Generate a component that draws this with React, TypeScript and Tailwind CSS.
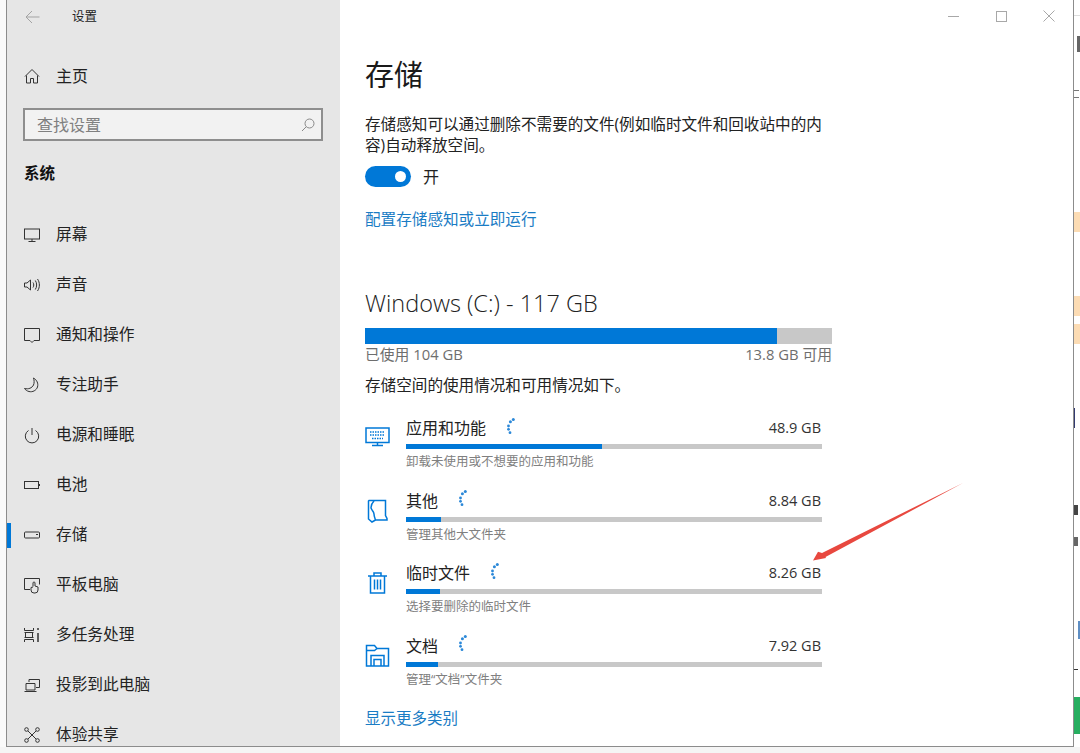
const cjk = { fontFamily: '"Open Sans", "Noto Sans CJK SC", sans-serif' };

const NavIcon = ({ name }: { name: string }) => {
  const paths: Record<string, React.ReactNode> = {
    home: <path d="M2 9.500 9 2.500l7 7M3.500 8.500V16h4v-4.500h3V16h4V8.500" />,
    display: (
      <>
        <rect x="1.500" y="3" width="15" height="10" />
        <path d="M9 13v2.500M5.500 15.500h7" />
      </>
    ),
    sound: (
      <>
        <path d="M1.500 7v4h2.500l3.500 3V4L4 7z" />
        <path d="M10 6.500c1 1.500 1 3.500 0 5M12.300 4.500c1.800 2.700 1.800 6.300 0 9M14.500 3c2.500 3.600 2.500 8.400 0 12" />
      </>
    ),
    notify: <path d="M1.500 2.500h15v12h-5.500L9 16.500l-2-2H1.500z" />,
    moon: <path d="M10.500 2c3.500 2 5 5.500 4 9-1 3.300-5 5.500-8.500 4.500-2-.5-3.500-1.500-4.500-3 4 1 7.500-.5 9-3.500.9-2 .8-4.700 0-7z" />,
    power: <path d="M9 2v7M5.500 4.500a6.700 6.700 0 1 0 7 0" />,
    battery: (
      <>
        <rect x="1.500" y="5.500" width="14" height="7" />
        <path d="M16.500 8v2" />
      </>
    ),
    storage: (
      <>
        <rect x="1.500" y="6" width="15" height="6" rx="1" />
        <path d="M13 8.500h2" />
      </>
    ),
    tablet: (
      <>
        <path d="M7 13.500H1.500v-11h15v6" />
        <path d="M10 10.500V7a1 1 0 0 1 2 0v3l3 1v3a3 3 0 0 1-3 3h-1a3 3 0 0 1-3-3v-2.500l2-.5" />
      </>
    ),
    multi: (
      <>
        <path d="M1.500 2v2.500h9V2M1.500 16v-2.500h9V16M2.500 6.500v5M9.500 6.500v5M1.500 6.500h9M1.500 11.500h9" />
        <path d="M15 2v2M15 7v9" strokeWidth="1.500" />
      </>
    ),
    project: (
      <>
        <path d="M6 6V3.500h10.500v8H13" />
        <path d="M3 7.500h9v6.500H3zM1.500 15.500h12" />
      </>
    ),
    share: (
      <>
        <circle cx="3.500" cy="3.500" r="1.800" />
        <circle cx="14.500" cy="3.500" r="1.800" />
        <circle cx="3.500" cy="14.500" r="1.800" />
        <circle cx="14.500" cy="14.500" r="1.800" />
        <path d="M5 5l8 8M13 5l-8 8" />
      </>
    ),
  };
  return (
    <svg width="18" height="18" viewBox="0 0 18 18" fill="none" stroke="#333" strokeWidth="1">
      {paths[name]}
    </svg>
  );
};

const StorageIcon = ({ name }: { name: string }) => {
  const paths: Record<string, React.ReactNode> = {
    apps: (
      <>
        <rect x="1" y="3" width="23" height="14.500" />
        <path d="M12.500 17.500v3M7 20.500h11" />
        <path d="M5 7h15M5 10h15M7 13.500h11" strokeDasharray="1.500 1" strokeWidth="1.500" />
      </>
    ),
    other: <path d="M4 2.500h16.500v15l1.500 3v1.500H10.500L7 24 3.500 21V3zM9 3c-2 2-3 4-3 6.500 0 2.500 3 3.500 3 6.500 0 2.500 1 4.500 1.500 6" />,
    trash: (
      <>
        <path d="M3 6h19M9 6V3h7v3M5.500 6v17h14V6" />
        <path d="M9.500 9.500v10M12.500 9.500v10M15.500 9.500v10" />
      </>
    ),
    docs: (
      <>
        <path d="M1.500 23V2.500h8l2.500 3h11.500V23z" />
        <path d="M1.500 7.500h8L12 5.500" />
        <path d="M6 23V12.500h13V23M9 23v-6.500h7V23" />
      </>
    ),
  };
  return (
    <svg width="25" height="25" viewBox="0 0 25 25" fill="none" stroke="#0078d7" strokeWidth="1.500">
      {paths[name]}
    </svg>
  );
};

const Spinner = () => (
  <svg width="10" height="17" viewBox="0 0 10 17" fill="#2b88d8">
    <circle cx="6.300" cy="1.500" r="1.500" />
    <circle cx="3.400" cy="3.800" r="1.500" />
    <circle cx="1.500" cy="8" r="1.400" />
    <circle cx="1.500" cy="11.300" r="1.400" />
    <circle cx="3" cy="14.700" r="1.400" />
  </svg>
);

const navItems = [
  { icon: "display", label: "屏幕" },
  { icon: "sound", label: "声音" },
  { icon: "notify", label: "通知和操作" },
  { icon: "moon", label: "专注助手" },
  { icon: "power", label: "电源和睡眠" },
  { icon: "battery", label: "电池" },
  { icon: "storage", label: "存储", active: true },
  { icon: "tablet", label: "平板电脑" },
  { icon: "multi", label: "多任务处理" },
  { icon: "project", label: "投影到此电脑" },
  { icon: "share", label: "体验共享" },
];

const storageItems = [
  { icon: "apps", name: "应用和功能", size: "48.9 GB", desc: "卸载未使用或不想要的应用和功能", used: 196 },
  { icon: "other", name: "其他", size: "8.84 GB", desc: "管理其他大文件夹", used: 35 },
  { icon: "trash", name: "临时文件", size: "8.26 GB", desc: "选择要删除的临时文件", used: 34 },
  { icon: "docs", name: "文档", size: "7.92 GB", desc: "管理“文档”文件夹", used: 32 },
];

const Sidebar = () => (
  <div className="w-[333px] h-full shrink-0 bg-[#e6e6e6] overflow-hidden">
    <div className="h-[34px] flex items-center pl-[18px] text-[#222]">
      <svg width="15" height="14" viewBox="0 0 15 14" fill="none" stroke="#a3a3a3" strokeWidth="1">
        <path d="M14.500 7H1M7 1 1 7l6 6" />
      </svg>
      <span className="ml-[32px] text-[12.500px]">设置</span>
    </div>
    <div className="mt-[17px] h-[50px] flex items-center pl-[16px] text-[16px] text-[#222]">
      <NavIcon name="home" />
      <span className="ml-[15px]">主页</span>
    </div>
    <div className="ml-[16px] mt-[7px] w-[300px] h-[33px] border-2 border-[#8e8e8e] bg-[#f2f2f2] flex items-center pl-[12px] pr-[6px] justify-between">
      <span className="text-[16px] text-[#808080]">查找设置</span>
      <svg width="14" height="14" viewBox="0 0 14 14" fill="none" stroke="#8a8a8a" strokeWidth="1">
        <circle cx="8.500" cy="5.500" r="4.500" />
        <path d="M5.200 8.800 1 13" />
      </svg>
    </div>
    <div className="mt-[22px] pl-[17px] text-[15.500px] font-bold text-[#111] leading-[20px]">系统</div>
    <div className="mt-[27px]">
      {navItems.map((item) => (
        <div key={item.label} className="relative h-[50px] flex items-center pl-[16px] text-[#222]">
          {item.active && <div className="absolute left-0 top-[13px] w-[4px] h-[25px] bg-[#0078d7]" />}
          <NavIcon name={item.icon} />
          <span className="ml-[15px] text-[15.700px]">{item.label}</span>
        </div>
      ))}
    </div>
  </div>
);

const Main = () => (
  <div className="flex-1 h-full bg-white relative overflow-hidden">
    <div className="h-[32px] flex items-center justify-end pr-[18px]">
      <div className="w-[11px] h-px bg-[#a8a8a8]" />
      <div className="ml-[37px] w-[11px] h-[11px] border border-[#a8a8a8]" />
      <svg className="ml-[36px]" width="12" height="12" viewBox="0 0 12 12" stroke="#a8a8a8" strokeWidth="1">
        <path d="M.500.500l11 11M11.500.500l-11 11" />
      </svg>
    </div>
    <div className="pl-[25px]">
      <h1 className="mt-[22px] text-[29px] leading-[42px] text-[#1a1a1a]">存储</h1>
      <p className="mt-[18px] w-[470px] text-[15.600px] leading-[21px] text-[#222]">
        存储感知可以通过删除不需要的文件(例如临时文件和回收站中的内容)自动释放空间。
      </p>
      <div className="mt-[10px] flex items-center h-[21px]">
        <div className="w-[46px] h-[21px] rounded-full bg-[#0078d7] flex items-center justify-end pr-[5px]">
          <div className="w-[11px] h-[11px] rounded-full bg-white" />
        </div>
        <span className="ml-[12px] text-[16px] text-[#222]">开</span>
      </div>
      <div className="mt-[21px] text-[15.600px] leading-[22px] text-[#1a7cc4]">配置存储感知或立即运行</div>
      <h2 className="mt-[56px] text-[23.500px] font-light leading-[34px] text-[#222]">Windows (C:) - 117 GB</h2>
      <div className="mt-[8px] w-[467px] h-[16px] bg-[#c8c8c8]">
        <div className="w-[412px] h-full bg-[#0078d7]" />
      </div>
      <div className="mt-0 w-[467px] flex justify-between text-[14.800px] leading-[20px] text-[#6e6e6e]">
        <span>已使用 104 GB</span>
        <span>13.8 GB 可用</span>
      </div>
      <div className="mt-[10px] text-[15.600px] leading-[22px] text-[#222]">存储空间的使用情况和可用情况如下。</div>
      <div className="mt-[21px]">
        {storageItems.map((item) => (
          <div key={item.name} className="flex h-[72.600px]">
            <div className="w-[41px] pt-[8px]">
              <StorageIcon name={item.icon} />
            </div>
            <div className="w-[416px]">
              <div className="h-[22px] flex items-center text-[16px] text-[#222]">
                <span>{item.name}</span>
                <span className="ml-[21px] -mt-[4px]">
                  <Spinner />
                </span>
                <span className="ml-auto mr-px text-[14.500px] text-[#333]">{item.size}</span>
              </div>
              <div className="mt-[5px] h-[5px] bg-[#c8c8c8]">
                <div className="h-full bg-[#0078d7]" style={{ width: item.used }} />
              </div>
              <div className="mt-[5px] text-[12.500px] leading-[16px] text-[#808080]">{item.desc}</div>
            </div>
          </div>
        ))}
      </div>
      <div className="mt-0 text-[15.500px] leading-[22px] text-[#1a7cc4]">显示更多类别</div>
    </div>
  </div>
);

const RightEdge = () => (
  <div className="flex-1 h-full overflow-hidden bg-white flex flex-col">
    <div className="mt-[15px] h-px bg-[#dddddd]" />
    <div className="mt-[20px] ml-[3px] h-[16px] w-[3px] bg-[#666]" />
    <div className="mt-[38px] w-[5px] h-[8px] border-y border-[#777]" />
    <div className="mt-[114px] h-[20px] bg-[#fcdcb4]" />
    <div className="mt-[64px] h-[20px] bg-[#fcdcb4]" />
    <div className="mt-[8px] h-[20px] bg-[#fcdcb4]" />
    <div className="mt-[64px] w-[1px] h-[20px] bg-[#333a70]" />
    <div className="mt-[77px] w-[4px] h-[10px] bg-[#444]" />
    <div className="mt-[22px] w-[4px] h-[9px] bg-[#666]" />
    <div className="mt-[75px] ml-[4px] w-[2px] h-[18px] bg-[#5f8fc4]" />
    <div className="mt-[30px] w-[4px] h-px bg-[#333]" />
    <div className="mt-[27px] h-[37px] bg-[#27ae60]" />
  </div>
);

export default function App() {
  return (
    <div className="relative w-[1080px] h-[753px] overflow-hidden bg-[#f5f5f5]" style={cjk}>
      <div className="flex h-[747px] bg-white">
        <div className="w-[6px] shrink-0 bg-[#fafafa]" />
        <div className="w-[1068px] shrink-0 h-full flex border-x border-b border-[#8c8c8c]">
          <Sidebar />
          <Main />
        </div>
        <RightEdge />
      </div>
      <svg className="absolute left-[810px] top-[480px]" width="156" height="84" viewBox="0 0 156 84" fill="#e8483f">
        <path d="M153 3 15.500 77 16 78 3 80.600 8 71.700 12 73z" />
      </svg>
    </div>
  );
}
